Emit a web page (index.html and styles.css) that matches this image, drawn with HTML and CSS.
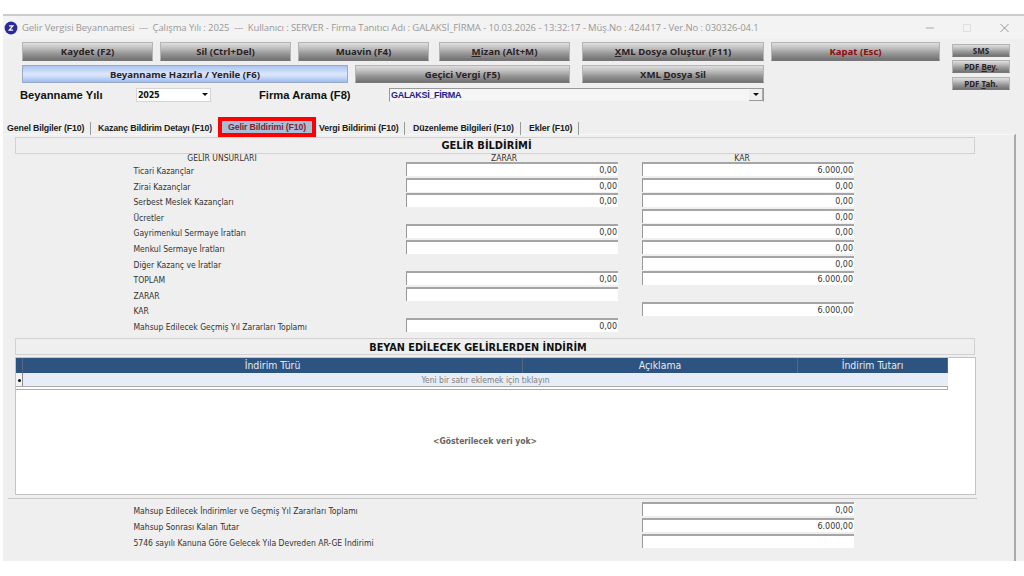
FILE: index.html
```html
<!DOCTYPE html>
<html lang="tr">
<head>
  <meta charset="UTF-8">
  <meta name="viewport" content="width=device-width, initial-scale=1.0">
  <title>Gelir Vergisi Beyannamesi</title>
  <link rel="stylesheet" href="styles.css">
</head>
<body>
  <div class="window">
    <div class="titlebar">
      <svg class="logo" viewBox="0 0 14 14">
        <circle cx="7" cy="7" r="6.4" fill="#2a2a9c"/>
        <path d="M5 4.900H8.800L5.300 9.100H9.100" fill="none" stroke="#fff" stroke-width="1.3"/>
      </svg>
      <span class="title">Gelir Vergisi Beyannamesi&nbsp; ---&nbsp; Çalışma Yılı : 2025&nbsp; ---&nbsp; Kullanıcı : SERVER - Firma Tanıtıcı Adı : GALAKSİ_FİRMA - 10.03.2026 - 13:32:17 - Müş.No : 424417 - Ver.No : 030326-04.1</span>
      <svg class="controls" viewBox="0 0 90 12">
        <path d="M2 6H10" stroke="#aaa"/>
        <rect x="39.5" y="2.5" width="7" height="7" fill="none" stroke="#e0e0e0"/>
        <path d="M76.500 2L84.500 10M84.500 2L76.500 10" stroke="#999"/>
      </svg>
    </div>

    <div class="toolbar">
      <div class="buttons">
        <button class="btn">Kaydet (F2)</button>
        <button class="btn">Sil (Ctrl+Del)</button>
        <button class="btn">Muavin (F4)</button>
        <button class="btn mizan"><span><u>M</u>izan (Alt+M)</span></button>
        <button class="btn xml"><span><u>X</u>ML Dosya Oluştur (F11)</span></button>
        <button class="btn close">Kapat (Esc)</button>
        <button class="btn prepare">Beyanname Hazırla / Yenile (F6)</button>
        <button class="btn temp">Geçici Vergi (F5)</button>
        <button class="btn xml"><span>XML <u>D</u>osya Sil</span></button>
      </div>
      <div class="side">
        <button class="btn small">SMS</button>
        <button class="btn small"><span>PDF <u>B</u>ey.</span></button>
        <button class="btn small last"><span>PDF <u>T</u>ah.</span></button>
      </div>
    </div>

    <div class="filters">
      <label class="year-label">Beyanname Yılı</label>
      <div class="combo year"><span>2025</span><i class="arrow"></i></div>
      <label class="firm-label">Firma Arama (F8)</label>
      <div class="combo firm"><span>GALAKSİ_FİRMA</span><b class="drop"><i class="arrow"></i></b></div>
    </div>

    <div class="tabs">
      <div class="tab t1">Genel Bilgiler (F10)</div>
      <div class="tab t2">Kazanç Bildirim Detayı (F10)</div>
      <div class="tab active"><span>Gelir Bildirimi (F10)</span></div>
      <div class="tab t4">Vergi Bildirimi (F10)</div>
      <div class="tab t5">Düzenleme Bilgileri (F10)</div>
      <div class="tab t6">Ekler (F10)</div>
    </div>

    <div class="page">
      <div class="heading">GELİR BİLDİRİMİ</div>
      <div class="columns">
        <span>GELİR UNSURLARI</span><span>ZARAR</span><span>KAR</span>
      </div>
      <div class="rows">
        <div class="row"><label>Ticari Kazançlar</label><div class="field loss">0,00</div><div class="field profit">6.000,00</div></div>
        <div class="row"><label>Zirai Kazançlar</label><div class="field loss">0,00</div><div class="field profit">0,00</div></div>
        <div class="row"><label>Serbest Meslek Kazançları</label><div class="field loss">0,00</div><div class="field profit">0,00</div></div>
        <div class="row"><label>Ücretler</label><div class="field profit">0,00</div></div>
        <div class="row"><label>Gayrimenkul Sermaye İratları</label><div class="field loss">0,00</div><div class="field profit">0,00</div></div>
        <div class="row"><label>Menkul Sermaye İratları</label><div class="field loss"></div><div class="field profit">0,00</div></div>
        <div class="row"><label>Diğer Kazanç ve İratlar</label><div class="field profit">0,00</div></div>
        <div class="row"><label>TOPLAM</label><div class="field loss">0,00</div><div class="field profit">6.000,00</div></div>
        <div class="row"><label>ZARAR</label><div class="field loss"></div></div>
        <div class="row"><label>KAR</label><div class="field profit">6.000,00</div></div>
        <div class="row"><label>Mahsup Edilecek Geçmiş Yıl Zararları Toplamı</label><div class="field loss">0,00</div></div>
      </div>

      <div class="heading second">BEYAN EDİLECEK GELİRLERDEN İNDİRİM</div>
      <div class="grid">
        <div class="grid-head">
          <span></span><span>İndirim Türü</span><span>Açıklama</span><span>İndirim Tutarı</span>
        </div>
        <div class="grid-new">
          <span class="marker"></span><span class="hint">Yeni bir satır eklemek için tıklayın</span>
        </div>
        <div class="grid-line"></div>
        <div class="empty">&lt;Gösterilecek veri yok&gt;</div>
      </div>

      <div class="divider"></div>
      <div class="rows totals">
        <div class="row"><label>Mahsup Edilecek İndirimler ve Geçmiş Yıl Zararları Toplamı</label><div class="field profit">0,00</div></div>
        <div class="row"><label>Mahsup Sonrası Kalan Tutar</label><div class="field profit">6.000,00</div></div>
        <div class="row"><label>5746 sayılı Kanuna Göre Gelecek Yıla Devreden AR-GE İndirimi</label><div class="field profit"></div></div>
      </div>
    </div>
  </div>
</body>
</html>
```
FILE: styles.css
```css
* {
  box-sizing: border-box;
}
body {
  margin: 0;
  padding: 14px 0 0 3px;
  height: 576px;
  background: #fff;
  overflow: hidden;
  color: #333;
  font-family: "DejaVu Sans Condensed", "DejaVu Sans", sans-serif;
  font-size: 8.5px;
  white-space: nowrap;
}
.window {
  height: 547px;
  background: #efefef;
  border-top: 2px solid #cbcbcb;
}
.titlebar {
  display: flex;
  align-items: center;
  height: 23px;
  padding-left: 1px;
  background: #f3f3f3;
  color: #999;
  font-family: "Open Sans", sans-serif;
  font-size: 9.5px;
}
.logo {
  width: 14px;
  height: 14px;
  margin-right: 4px;
}
.title {
  width: 902px;
  letter-spacing: -0.1px;
}
.controls {
  width: 90px;
  height: 12px;
}

/* toolbar */
.toolbar {
  display: flex;
  height: 48px;
  padding: 3px 0 0 19px;
}
.buttons {
  display: flex;
  flex-wrap: wrap;
  align-content: flex-start;
  column-gap: 7px;
  row-gap: 4px;
  width: 930px;
}
.btn {
  width: 131px;
  height: 19px;
  padding: 0;
  border: 1px solid #b4b4b4;
  border-bottom-color: #777;
  background: linear-gradient(#dedede, #c0c0c0 30%, #999 60%, #717171);
  color: #2b2225;
  font-family: "Noto Sans", sans-serif;
  font-size: 9.6px;
  font-weight: bold;
  line-height: 17px;
}
.mizan {
  margin-left: 3px;
}
.xml {
  width: 182px;
  margin-left: 5px;
}
.close {
  width: 169px;
  color: #8e0c0c;
}
.prepare {
  width: 326px;
  height: 18px;
  background: linear-gradient(#a9c3f0, #dce7fb 50%, #c9dafa 70%, #9dbaf0);
  border-color: #9aa9c6;
}
.temp {
  width: 215px;
  height: 18px;
}
.temp + .xml {
  height: 18px;
}
.side {
  padding-top: 2px;
}
.side .small {
  display: block;
  width: 58px;
  height: 13px;
  margin-bottom: 3px;
  font-size: 8px;
  line-height: 11px;
}
.side .last {
  margin-top: 4px;
}

/* year and company */
.filters {
  display: flex;
  align-items: center;
  height: 15px;
  padding-left: 17px;
  color: #111;
  font-family: "Liberation Sans", sans-serif;
  font-size: 11.2px;
  font-weight: bold;
}
.year-label {
  width: 116px;
}
.combo {
  display: flex;
  align-items: center;
  justify-content: space-between;
  height: 14px;
  background: #fff;
  border: 1px solid #d5d5d5;
}
.year {
  width: 75px;
  padding: 0 2px 0 1px;
  font-family: "DejaVu Sans Condensed", sans-serif;
  font-size: 9px;
  letter-spacing: -0.3px;
}
.firm-label {
  width: 130px;
  margin-left: 48px;
}
.firm {
  width: 375px;
  padding-left: 1px;
  background: #f5f5f5;
  border: 1px solid #999;
  border-bottom-color: #eee;
  color: #22228c;
  font-size: 9px;
  letter-spacing: -0.3px;
}
.drop {
  display: flex;
  align-items: center;
  justify-content: center;
  width: 14px;
  height: 12px;
  background: #efefef;
  border-right: 1px solid #aaa;
  border-bottom: 1px solid #999;
}
.arrow {
  border: 3px solid transparent;
  border-top-color: #111;
  border-bottom: 0;
}

/* tabs */
.tabs {
  display: flex;
  align-items: center;
  height: 20px;
  margin-top: 15px;
  color: #1c1c1c;
  font-family: "Liberation Sans", sans-serif;
  font-size: 8.8px;
  font-weight: bold;
  letter-spacing: -0.15px;
}
.tab {
  height: 13px;
  padding-left: 8px;
  margin-top: 3px;
  line-height: 13px;
  border-right: 1px solid #999;
}
.t1 {
  width: 88px;
  padding-left: 4px;
}
.t2 {
  width: 125px;
  border-right: 0;
  padding-left: 7px;
}
.active {
  width: 98px;
  height: 20px;
  margin: 0 0 0 2px;
  padding: 0;
  border: 4px solid #f00;
  background: #a9bfd9;
  color: #8b1c2c;
  line-height: 12px;
  text-align: center;
}
.t4 {
  width: 88px;
  padding-left: 2px;
  margin-left: 1px;
}
.t5 {
  width: 116px;
}
.t6 {
  width: 58px;
}

/* declaration page */
.page {
  width: 1013px;
  height: 427px;
  margin-top: -3px;
  padding: 2px 0 0 5px;
  border-top: 1px solid #f8f8f8;
  border-right: 2px solid #aaa;
}
.heading {
  width: 960px;
  height: 17px;
  margin-left: 7px;
  border: 1px solid #d2d2d2;
  color: #111;
  font-size: 11px;
  font-weight: bold;
  line-height: 16px;
  text-align: center;
  padding-right: 17px;
}
.columns {
  display: flex;
  height: 8px;
  line-height: 8px;
}
.columns span {
  text-align: center;
}
.columns span:first-child {
  width: 282px;
  margin-left: 73px;
}
.columns span:nth-child(2) {
  width: 282px;
}
.columns span:last-child {
  width: 194px;
}
.row {
  display: grid;
  grid-template-columns: 273px 212px 213px;
  height: 15.6px;
  padding-left: 125px;
}
.row label {
  padding-left: 0.5px;
  line-height: 18px;
}
.field {
  height: 14px;
  padding-right: 1px;
  background: #fff;
  border-top: 2px solid #a5a5a5;
  border-left: 1px solid #999;
  font-size: 8.9px;
  line-height: 12px;
  text-align: right;
}
.loss {
  grid-column: 2;
}
.profit {
  grid-column: 3;
  margin-left: 24px;
  margin-right: -23px;
}
.second {
  margin-top: 4px;
  padding-right: 34px;
  font-size: 10.8px;
  line-height: 17px;
}

/* deductions grid */
.grid {
  width: 961px;
  height: 138px;
  margin: 2px 0 0 7px;
  border: 1px solid #c4c4c4;
  background: #fff;
}
.grid-head {
  display: grid;
  grid-template-columns: 7px 500px 275px 150px;
  width: 932px;
  height: 15px;
  background: #2d5480;
  color: #e4ebf4;
  font-size: 10.4px;
  line-height: 15px;
  text-align: center;
}
.grid-head span {
  border-right: 1px solid #53687f;
}
.grid-new {
  display: flex;
  width: 932px;
  height: 13px;
  background: #e6edf8;
  color: #808080;
  line-height: 14px;
}
.marker {
  width: 7px;
  background: #f3f3f3;
  border-right: 1px solid #888;
}
.marker::before {
  content: "";
  display: block;
  width: 3px;
  height: 3px;
  margin: 6px 0 0 2px;
  border-radius: 50%;
  background: #111;
}
.hint {
  width: 925px;
  text-align: center;
}
.grid-line {
  width: 932px;
  height: 4px;
  border: 1px solid #aaa;
  border-left: 0;
}
.empty {
  width: 938px;
  padding-top: 46px;
  color: #666;
  font-weight: bold;
  text-align: center;
}
.divider {
  width: 969px;
  height: 1px;
  margin-top: 3px;
  background: #c8c8c8;
}
.totals {
  padding-top: 3px;
}
.totals .row {
  height: 16.4px;
}
```
